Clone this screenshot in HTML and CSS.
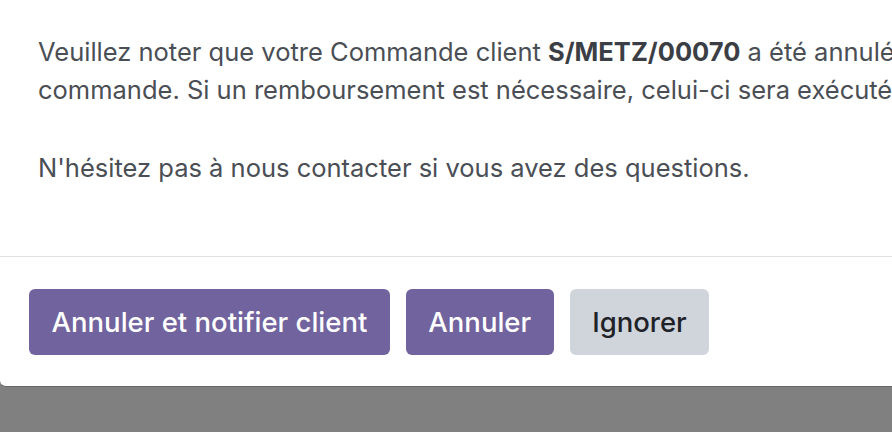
FILE: index.html
```html
<!DOCTYPE html>
<html lang="fr">
<head>
  <meta charset="utf-8">
  <title>Annuler la commande</title>
  <link rel="stylesheet" href="styles.css">
</head>
<body>

<!-- boîte de dialogue -->
<div class="modal">
  <div class="modal-body">
    <p>Veuillez noter que votre Commande client <b>S/METZ/00070</b> a été annulée. Nous vous prions de nous excuser pour l'annulation de cette<br>
    commande. Si un remboursement est nécessaire, celui-ci sera exécuté dans les meilleurs délais.</p>
    <p>N'hésitez pas à nous contacter si vous avez des questions.</p>
  </div>
  <div class="modal-footer">
    <button class="btn btn-primary">Annuler et notifier client</button>
    <button class="btn btn-primary">Annuler</button>
    <button class="btn btn-secondary">Ignorer</button>
  </div>
</div>

</body>
</html>
```

FILE: styles.css
```css
/* base */
body {
  margin: 0;
  padding: 0;
  background-color: #808080;
  font-family: Inter, "Noto Sans", sans-serif;
  overflow: hidden;
}

.modal {
  width: 1400px;
  background-color: #fff;
  border-bottom: 1px solid #666;
  border-bottom-left-radius: 6px;
}

.modal-body {
  padding: 33px 0 0 38px;
  height: 256px;
  box-sizing: border-box;
  font-size: 25.5px;
  line-height: 38px;
  color: #4a4e55;
  white-space: nowrap;
}

.modal-body p {
  margin: 0 0 40px 0;
}

.modal-body b {
  color: #3b3f45;
  font-weight: 700;
}

.modal-footer {
  border-top: 1px solid #dfe1e4;
  padding: 32px 0 31px 29px;
  display: flex;
  gap: 16px;
}

.btn {
  height: 66px;
  padding: 0 22.5px;
  border: none;
  border-radius: 6px;
  font-family: Inter, "Noto Sans", sans-serif;
  font-size: 27.5px;
  font-weight: 500;
  cursor: pointer;
}

.btn-primary {
  background-color: #71639e;
  color: #fff;
}

.btn-secondary {
  background-color: #d0d5dc;
  color: #1f2328;
}
```
